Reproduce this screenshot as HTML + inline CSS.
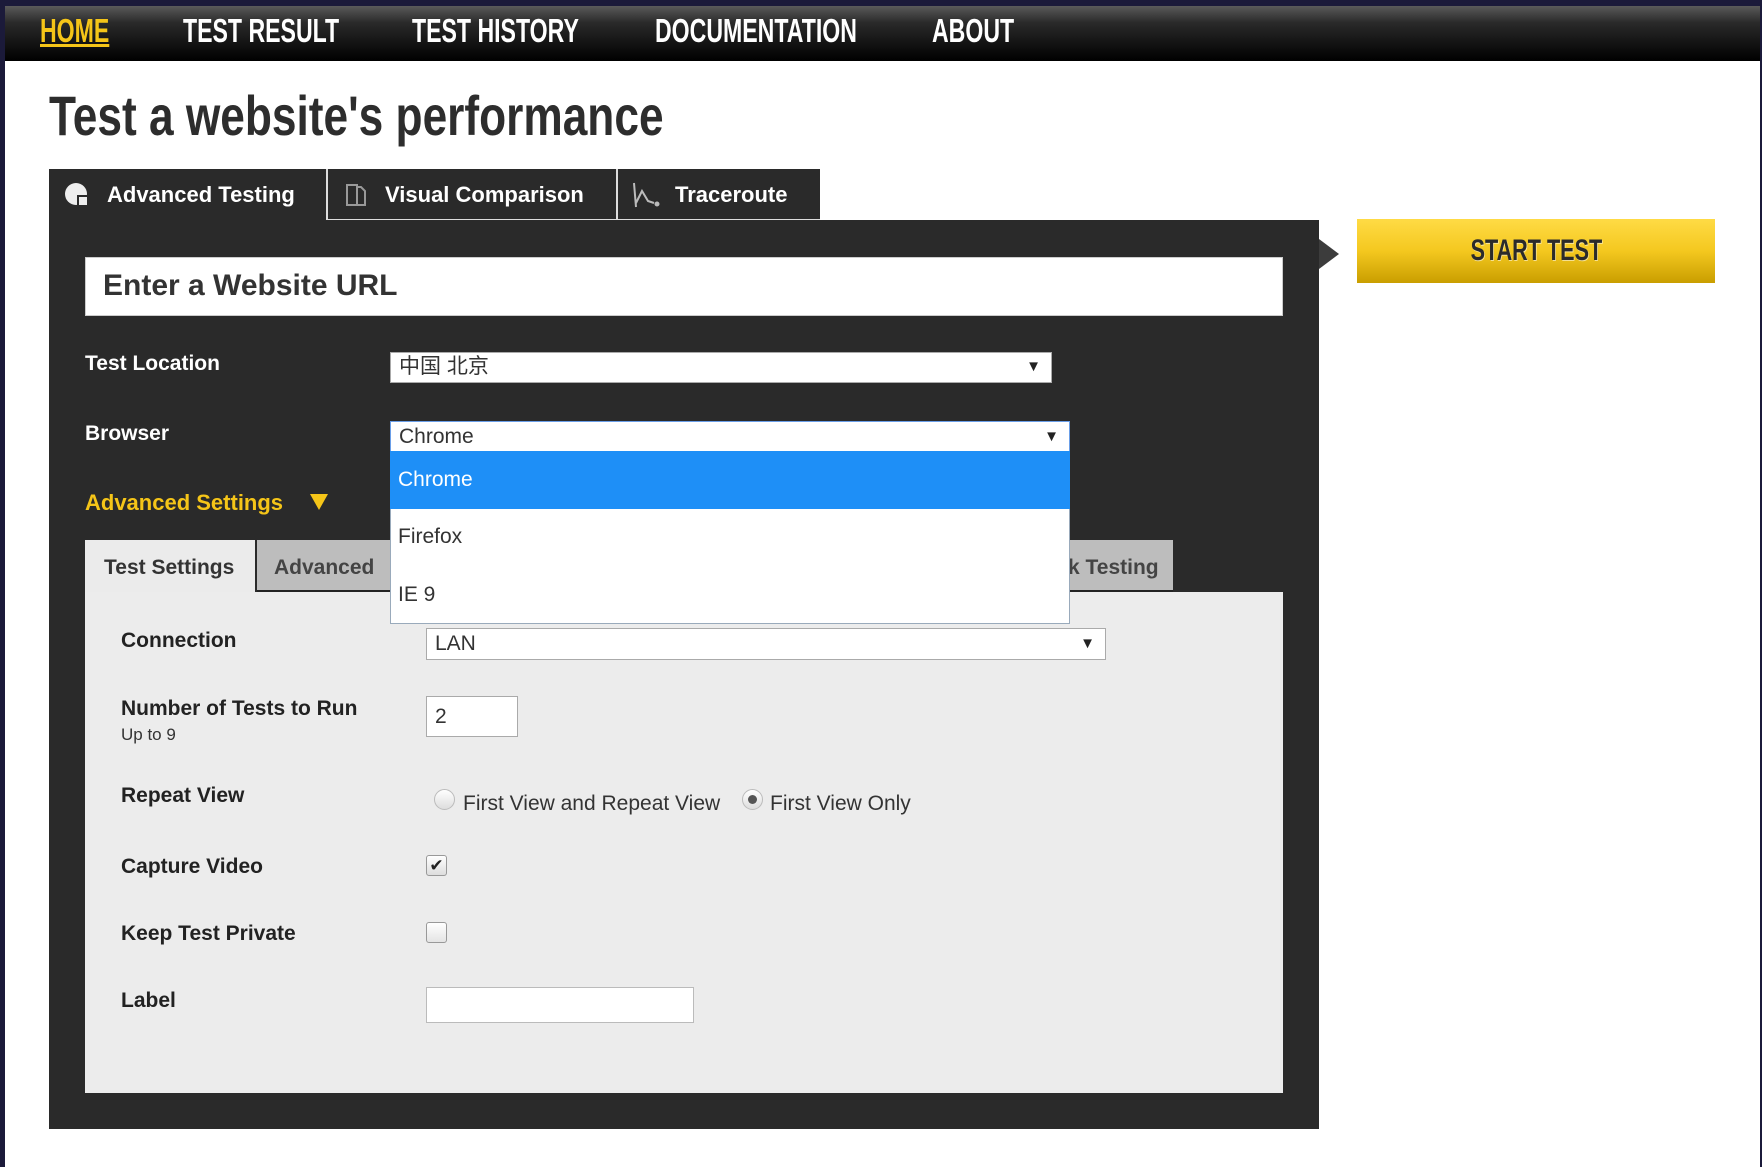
<!DOCTYPE html>
<html><head><meta charset="utf-8"><style>
*{margin:0;padding:0;box-sizing:border-box}
body{width:1762px;height:1167px;background:#1b1a3a;position:relative;overflow:hidden;font-family:"Liberation Sans","Noto Sans CJK SC",sans-serif}
.a{position:absolute}
.c{display:inline-block;transform-origin:0 50%;white-space:nowrap}
#page{left:5px;top:6px;width:1755px;height:1161px;background:#fff}
#nav{left:5px;top:6px;width:1755px;height:55px;background:linear-gradient(#5a5a5a 0%,#2a2a2a 30%,#000 100%)}
.nv{top:13px;font-weight:bold;font-size:33px;color:#fff;line-height:36px}
.nv span{transform:scaleX(.7)}
.lbl{font-weight:bold;font-size:21px;color:#fff}
.lbl2{font-weight:bold;font-size:21px;color:#222}
.sel{background:#fff;border:1px solid #aaa;font-size:21px;color:#333;padding-left:8px;line-height:28px}
.arr{position:absolute;right:10px;top:0;font-size:15px;color:#222}
</style></head><body>
<div class="a" id="page"></div>
<div class="a" id="nav"></div>
<div class="a nv" style="left:40px;color:#f5c518;"><span class="c" style="text-decoration:underline">HOME</span></div>
<div class="a nv" style="left:183px"><span class="c">TEST RESULT</span></div>
<div class="a nv" style="left:412px"><span class="c">TEST HISTORY</span></div>
<div class="a nv" style="left:655px"><span class="c">DOCUMENTATION</span></div>
<div class="a nv" style="left:932px"><span class="c">ABOUT</span></div>

<div class="a" style="left:49px;top:84px;font-size:56px;font-weight:bold;color:#2d2d2d;line-height:64px"><span class="c" style="transform:scaleX(.79)">Test a website's performance</span></div>

<!-- tabs -->
<div class="a" style="left:49px;top:169px;width:277px;height:52px;background:#2a2a2a"></div>
<div class="a" style="left:328px;top:169px;width:288px;height:50px;background:#2a2a2a"></div>
<div class="a" style="left:618px;top:169px;width:202px;height:50px;background:#2a2a2a"></div>
<div class="a" style="left:326px;top:169px;width:2px;height:52px;background:#ddd"></div>
<div class="a" style="left:616px;top:169px;width:2px;height:52px;background:#ddd"></div>
<div class="a" style="left:326px;top:219px;width:494px;height:2px;background:#ddd"></div>
<svg class="a" style="left:64px;top:182px" width="26" height="26" viewBox="0 0 26 26"><circle cx="12" cy="12" r="11" fill="#eee"/><path d="M13 13 L26 13 L26 26 L13 26Z" fill="#2a2a2a"/><rect x="15" y="15" width="8" height="8" fill="#eee"/></svg>
<div class="a" style="left:107px;top:182px;font-size:22px;font-weight:bold;color:#fff">Advanced Testing</div>
<svg class="a" style="left:344px;top:182px" width="26" height="26" viewBox="0 0 26 26" fill="none" stroke="#999" stroke-width="2"><path d="M3 3h10v20H3z"/><path d="M13 5h4l4 4v14h-8"/></svg>
<div class="a" style="left:385px;top:182px;font-size:22px;font-weight:bold;color:#fff">Visual Comparison</div>
<svg class="a" style="left:630px;top:181px" width="32" height="28" viewBox="0 0 32 28" fill="none" stroke="#bbb" stroke-width="2"><path d="M4 2 L6 26 M6 22 L12 10 L18 20 L24 22"/><circle cx="27" cy="23" r="1.5" fill="#bbb"/></svg>
<div class="a" style="left:675px;top:182px;font-size:22px;font-weight:bold;color:#fff">Traceroute</div>

<!-- dark panel -->
<div class="a" style="left:49px;top:220px;width:1270px;height:909px;background:#2a2a2a"></div>
<div class="a" style="left:1319px;top:239px;width:0;height:0;border-top:15px solid transparent;border-bottom:15px solid transparent;border-left:20px solid #3c3c3c"></div>
<div class="a" style="left:1357px;top:219px;width:358px;height:64px;background:linear-gradient(#ffdb45 0%,#f4c81f 50%,#c99e00 100%);text-align:center;line-height:64px;font-size:30px;font-weight:bold;color:#2b2b2b"><span class="c" style="transform:scaleX(.72);transform-origin:50% 50%;text-shadow:1px 1px 0 #fff8">START TEST</span></div>

<div class="a" style="left:85px;top:257px;width:1198px;height:59px;background:#fff;border:1px solid #ccc"></div>
<div class="a" style="left:103px;top:269px;font-size:30px;font-weight:bold;color:#333">Enter a Website URL</div>

<div class="a lbl" style="left:85px;top:352px">Test Location</div>
<div class="a sel" style="left:390px;top:352px;width:662px;height:31px">中国 北京<span class="arr">▼</span></div>
<div class="a lbl" style="left:85px;top:422px">Browser</div>

<div class="a lbl" style="left:85px;top:490px;color:#f5c518;font-size:22px">Advanced Settings</div>
<div class="a" style="left:310px;top:494px;width:0;height:0;border-left:9px solid transparent;border-right:9px solid transparent;border-top:16px solid #f5c518"></div>

<!-- subtabs -->
<div class="a" style="left:85px;top:540px;width:170px;height:53px;background:#ebebeb"></div>
<div class="a lbl2" style="left:104px;top:556px;font-weight:bold;color:#333">Test Settings</div>
<div class="a" style="left:257px;top:540px;width:150px;height:52px;background:#bdbdbd;border-bottom:2px solid #222"></div>
<div class="a lbl2" style="left:274px;top:556px;color:#444">Advanced</div>
<div class="a" style="left:960px;top:540px;width:213px;height:52px;background:#bdbdbd;border-bottom:2px solid #222"></div>
<div class="a lbl2" style="left:1068px;top:556px;color:#444">k Testing</div>

<div class="a" style="left:85px;top:592px;width:1198px;height:501px;background:#ececec"></div>
<div class="a lbl2" style="left:121px;top:629px">Connection</div>
<div class="a sel" style="left:426px;top:628px;width:680px;height:32px;line-height:30px">LAN<span class="arr">▼</span></div>
<div class="a lbl2" style="left:121px;top:697px">Number of Tests to Run</div>
<div class="a" style="left:121px;top:725px;font-size:17px;color:#333">Up to 9</div>
<div class="a sel" style="left:426px;top:696px;width:92px;height:41px;line-height:39px">2</div>
<div class="a lbl2" style="left:121px;top:784px">Repeat View</div>
<div class="a" style="left:434px;top:789px;width:21px;height:21px;border-radius:50%;background:linear-gradient(#fff,#ddd);border:1px solid #bbb"></div>
<div class="a" style="left:463px;top:792px;font-size:21px;color:#333">First View and Repeat View</div>
<div class="a" style="left:742px;top:789px;width:21px;height:21px;border-radius:50%;background:linear-gradient(#fff,#ddd);border:1px solid #bbb"><div style="position:absolute;left:5px;top:5px;width:9px;height:9px;border-radius:50%;background:#555"></div></div>
<div class="a" style="left:770px;top:792px;font-size:21px;color:#333">First View Only</div>
<div class="a lbl2" style="left:121px;top:855px">Capture Video</div>
<div class="a" style="left:426px;top:855px;width:21px;height:21px;border-radius:3px;background:linear-gradient(#fff,#ddd);border:1px solid #999;font-size:17px;line-height:19px;text-align:center;color:#222">✔</div>
<div class="a lbl2" style="left:121px;top:922px">Keep Test Private</div>
<div class="a" style="left:426px;top:922px;width:21px;height:21px;border-radius:3px;background:linear-gradient(#fff,#e4e4e4);border:1px solid #999"></div>
<div class="a lbl2" style="left:121px;top:989px">Label</div>
<div class="a" style="left:426px;top:987px;width:268px;height:36px;background:#fff;border:1px solid #bbb"></div>

<!-- browser select open -->
<div class="a sel" style="left:390px;top:421px;width:680px;height:31px;border:1px solid #6a9ee8;line-height:29px">Chrome<span class="arr">▼</span></div>
<div class="a" style="left:390px;top:451px;width:680px;height:173px;background:#fff;border:1px solid #9ab;border-top:none"></div>
<div class="a" style="left:390px;top:451px;width:680px;height:58px;background:#1e8ff7"></div>
<div class="a" style="left:398px;top:468px;font-size:21px;color:#fff">Chrome</div>
<div class="a" style="left:398px;top:525px;font-size:21px;color:#333">Firefox</div>
<div class="a" style="left:398px;top:583px;font-size:21px;color:#333">IE 9</div>
</body></html>
